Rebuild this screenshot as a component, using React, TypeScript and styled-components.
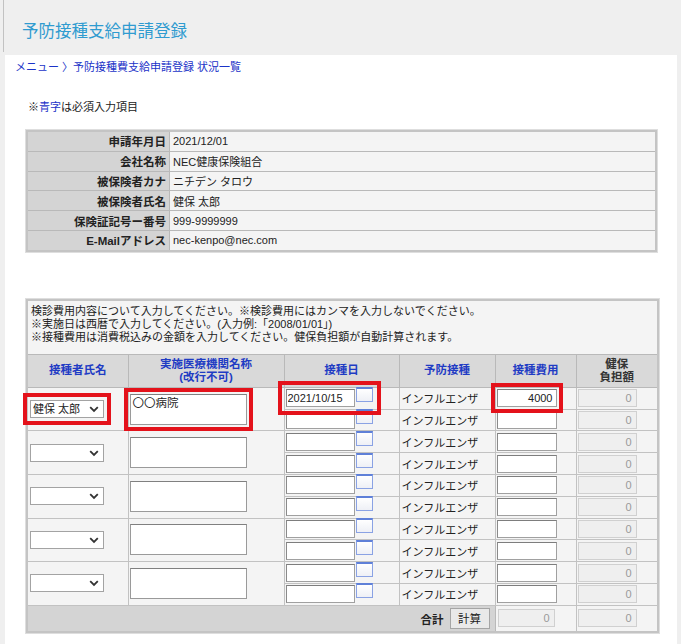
import React from 'react';
import styled, { createGlobalStyle } from 'styled-components';

const Global = createGlobalStyle`
  html, body { margin: 0; padding: 0; background: #efefef; overflow: hidden; }
  body {
    font-family: "Liberation Sans", "Noto Sans CJK JP", sans-serif;
    font-size: 11px;
    color: #222;
  }
  #root { min-height: 100vh; display: flex; flex-direction: column; }
`;

const Header = styled.header`
  height: 55px;
  padding-left: 3px;
  display: flex;
  box-sizing: border-box;
`;

const HeaderInner = styled.div`
  height: 52px;
  border-left: 1px solid #c2c2c2;
  padding: 8px 0 0 18px;
  box-sizing: border-box;
  display: flex;
  align-items: center;
`;

const Title = styled.h1`
  margin: 0;
  font-family: "Noto Sans CJK JP", sans-serif;
  font-size: 16.5px;
  font-weight: normal;
  color: #2f9bd0;
`;

const Main = styled.main`
  flex: 1;
  background: #fff;
  margin: 0 4px 0 5px;
  padding: 5px 0 0 10px;
`;

const Breadcrumb = styled.div`
  line-height: 14px;
  color: #1b33c8;
  font-size: 11px;
`;

const Note = styled.p`
  margin: 26px 0 0 13px;
  line-height: 14px;
  font-size: 11px;
`;

const Blue = styled.span`
  color: #1b33c8;
`;

const InfoTable = styled.table`
  width: 631px;
  margin: 16px 0 0 11px;
  border-collapse: collapse;
  border: 2px solid #c4c4c4;
  box-shadow: 0 0 0 1px #dedede;
`;

const InfoLabel = styled.th`
  width: 138px;
  height: 18.8px;
  padding: 0 3px 0 0;
  background: #d4d4d4;
  border: 1px solid #b9b9b9;
  text-align: right;
  font-weight: bold;
  font-size: 11.5px;
  color: #222;
`;

const InfoValue = styled.td`
  padding: 0 0 0 3px;
  background: #f4f4f4;
  border: 1px solid #b9b9b9;
  font-size: 11px;
`;

const FormTable = styled.table`
  width: 631px;
  margin: 47px 0 0 11px;
  border-collapse: collapse;
  border: 2px solid #c4c4c4;
  box-shadow: 0 0 0 1px #dedede;
  table-layout: fixed;
`;

const Instructions = styled.td`
  height: 49px;
  padding: 4px 3px 0;
  vertical-align: top;
  background: #f4f4f4;
  border: 1px solid #b9b9b9;
  line-height: 13px;
  font-size: 11px;
`;

const HeadCell = styled.th<{ $plain?: boolean }>`
  height: 32px;
  padding: 0;
  background: #d9d9d9;
  border: 1px solid #b9b9b9;
  font-weight: bold;
  font-size: 11.5px;
  line-height: 13px;
  color: ${(p) => (p.$plain ? '#333' : '#1f3cc4')};
  text-align: center;
`;

const Cell = styled.td<{ $pad?: number }>`
  height: 20.8px;
  padding: 0 0 0 ${(p) => p.$pad ?? 1}px;
  background: #f4f4f4;
  border: 1px solid #c2c2c2;
  vertical-align: middle;
  font-size: 11px;
  white-space: nowrap;
`;

const FooterLabel = styled.td`
  height: 25px;
  padding: 0 5px 0 0;
  background: #d4d4d4;
  border: 1px solid #b9b9b9;
  text-align: right;
  font-weight: bold;
  font-size: 11.5px;
`;

const SelectWrap = styled.span<{ $marked?: boolean }>`
  position: relative;
  display: inline-block;
  width: 74px;
  height: 18px;
  vertical-align: middle;
  ${(p) => (p.$marked ? 'outline: 4px solid #e4121b; outline-offset: 3px; z-index: 1;' : '')}
`;

const Select = styled.select`
  appearance: none;
  display: block;
  width: 74px;
  height: 18px;
  box-sizing: border-box;
  border: 1px solid #a3a3a3;
  border-radius: 0;
  background: #fff;
  padding: 0 14px 0 2px;
  font-family: inherit;
  font-size: 11px;
  color: #222;
  line-height: 16px;
`;

const Chevron = styled.svg`
  position: absolute;
  right: 5px;
  top: 6px;
  pointer-events: none;
`;

const TextArea = styled.textarea<{ $marked?: boolean }>`
  display: block;
  width: 117px;
  height: 31px;
  box-sizing: border-box;
  border: 1px solid #9a9a9a;
  border-top-color: #808080;
  resize: none;
  padding: 1px 2px;
  font-family: inherit;
  font-size: 11.5px;
  line-height: 14px;
  color: #222;
  position: relative;
  ${(p) => (p.$marked ? 'outline: 4px solid #e4121b; outline-offset: 2px; z-index: 1;' : '')}
`;

const DateGroup = styled.span<{ $marked?: boolean }>`
  position: relative;
  display: inline-flex;
  align-items: flex-start;
  gap: 1px;
  vertical-align: middle;
  ${(p) => (p.$marked ? 'outline: 4px solid #e4121b; outline-offset: 4px; z-index: 1;' : '')}
`;

const TextInput = styled.input<{ $w: number; $right?: boolean; $marked?: boolean }>`
  width: ${(p) => p.$w}px;
  height: 18px;
  box-sizing: border-box;
  border: 1px solid #a0a0a0;
  border-top-color: #7d7d7d;
  border-left-color: #8a8a8a;
  padding: 0 ${(p) => (p.$right ? 3 : 1)}px 0 1px;
  font-family: inherit;
  font-size: 11px;
  color: #222;
  background: #fff;
  text-align: ${(p) => (p.$right ? 'right' : 'left')};
  vertical-align: middle;
  position: relative;
  ${(p) => (p.$marked ? 'outline: 4px solid #e4121b; outline-offset: 2px; z-index: 1;' : '')}
`;

const Disabled = styled.input<{ $w: number }>`
  width: ${(p) => p.$w}px;
  height: 18px;
  box-sizing: border-box;
  border: 1px solid #d0d0d0;
  background: #efefef;
  padding: 0 4px 0 0;
  font-family: inherit;
  font-size: 11px;
  color: #9a9a9a;
  text-align: right;
  vertical-align: middle;
`;

const CalendarIcon = styled.span`
  display: block;
  width: 17px;
  height: 15px;
  margin-top: -2px;
  box-sizing: border-box;
  border: 1px solid #8aa2e4;
  border-top: 2px solid #5f80d8;
  background: linear-gradient(#ffffff, #eef0f6);
`;

const CalcButton = styled.button`
  width: 40px;
  height: 21px;
  margin-left: 6px;
  border: 1px solid #a5a5a5;
  background: #e9e9e9;
  font-family: inherit;
  font-size: 11.5px;
  color: #222;
  padding: 0;
  vertical-align: middle;
`;

const SumText = styled.span`
  vertical-align: middle;
`;

const Col = styled.col<{ $w: number }>`
  width: ${(p) => p.$w}px;
`;

function ChevronDown() {
  return (
    <Chevron width="10" height="7" viewBox="0 0 10 7">
      <path d="M1.2 1.2 L5 5 L8.8 1.2" fill="none" stroke="#333" strokeWidth="1.8" />
    </Chevron>
  );
}

type Group = { name?: string; hospital?: string; date?: string; cost?: string };

const groups: Group[] = [
  { name: '健保 太郎', hospital: '〇〇病院', date: '2021/10/15', cost: '4000' },
  {},
  {},
  {},
  {},
];

const info: [string, string][] = [
  ['申請年月日', '2021/12/01'],
  ['会社名称', 'NEC健康保険組合'],
  ['被保険者カナ', 'ニチデン タロウ'],
  ['被保険者氏名', '健保 太郎'],
  ['保険証記号ー番号', ' 999-9999999'],
  ['E-Mailアドレス', 'nec-kenpo@nec.com'],
];

function SubRowCells({ date, cost, marked }: { date?: string; cost?: string; marked: boolean }) {
  return (
    <>
      <Cell>
        <DateGroup $marked={marked}>
          <TextInput $w={69} defaultValue={date ?? ''} />
          <CalendarIcon />
        </DateGroup>
      </Cell>
      <Cell $pad={2}>インフルエンザ</Cell>
      <Cell>
        <TextInput $w={60} $right defaultValue={cost ?? ''} $marked={marked} />
      </Cell>
      <Cell>
        <Disabled $w={59} disabled defaultValue="0" />
      </Cell>
    </>
  );
}

export default function App() {
  return (
    <>
      <Global />
      <Header>
        <HeaderInner>
          <Title>予防接種支給申請登録</Title>
        </HeaderInner>
      </Header>
      <Main>
        <Breadcrumb>メニュー 〉予防接種費支給申請登録 状況一覧</Breadcrumb>
        <Note>
          ※<Blue>青字</Blue>は必須入力項目
        </Note>
        <InfoTable>
          <tbody>
            {info.map(([k, v]) => (
              <tr key={k}>
                <InfoLabel>{k}</InfoLabel>
                <InfoValue>{v}</InfoValue>
              </tr>
            ))}
          </tbody>
        </InfoTable>
        <FormTable>
          <colgroup>
            <Col $w={101} />
            <Col $w={156} />
            <Col $w={115} />
            <Col $w={96} />
            <Col $w={81} />
            <Col $w={82} />
          </colgroup>
          <tbody>
            <tr>
              <Instructions colSpan={6}>
                検診費用内容について入力してください。※検診費用にはカンマを入力しないでください。
                <br />
                ※実施日は西暦で入力してください。(入力例:「2008/01/01」)
                <br />
                ※接種費用は消費税込みの金額を入力してください。健保負担額が自動計算されます。
              </Instructions>
            </tr>
            <tr>
              <HeadCell>接種者氏名</HeadCell>
              <HeadCell>
                実施医療機関名称
                <br />
                (改行不可)
              </HeadCell>
              <HeadCell>接種日</HeadCell>
              <HeadCell>予防接種</HeadCell>
              <HeadCell>接種費用</HeadCell>
              <HeadCell $plain>
                健保
                <br />
                負担額
              </HeadCell>
            </tr>
            {groups.map((g, i) => (
              <React.Fragment key={i}>
                <tr>
                  <Cell rowSpan={2} $pad={2}>
                    <SelectWrap $marked={i === 0}>
                      <Select defaultValue={g.name ?? ''}>
                        <option value=""></option>
                        <option value="健保 太郎">健保 太郎</option>
                      </Select>
                      <ChevronDown />
                    </SelectWrap>
                  </Cell>
                  <Cell rowSpan={2} $pad={1}>
                    <TextArea $marked={i === 0} defaultValue={g.hospital ?? ''} />
                  </Cell>
                  <SubRowCells date={g.date} cost={g.cost} marked={i === 0} />
                </tr>
                <tr>
                  <SubRowCells marked={false} />
                </tr>
              </React.Fragment>
            ))}
            <tr>
              <FooterLabel colSpan={4}>
                <SumText>合計</SumText>
                <CalcButton type="button">計算</CalcButton>
              </FooterLabel>
              <Cell $pad={2}>
                <Disabled $w={57} disabled defaultValue="0" />
              </Cell>
              <Cell>
                <Disabled $w={59} disabled defaultValue="0" />
              </Cell>
            </tr>
          </tbody>
        </FormTable>
      </Main>
    </>
  );
}
